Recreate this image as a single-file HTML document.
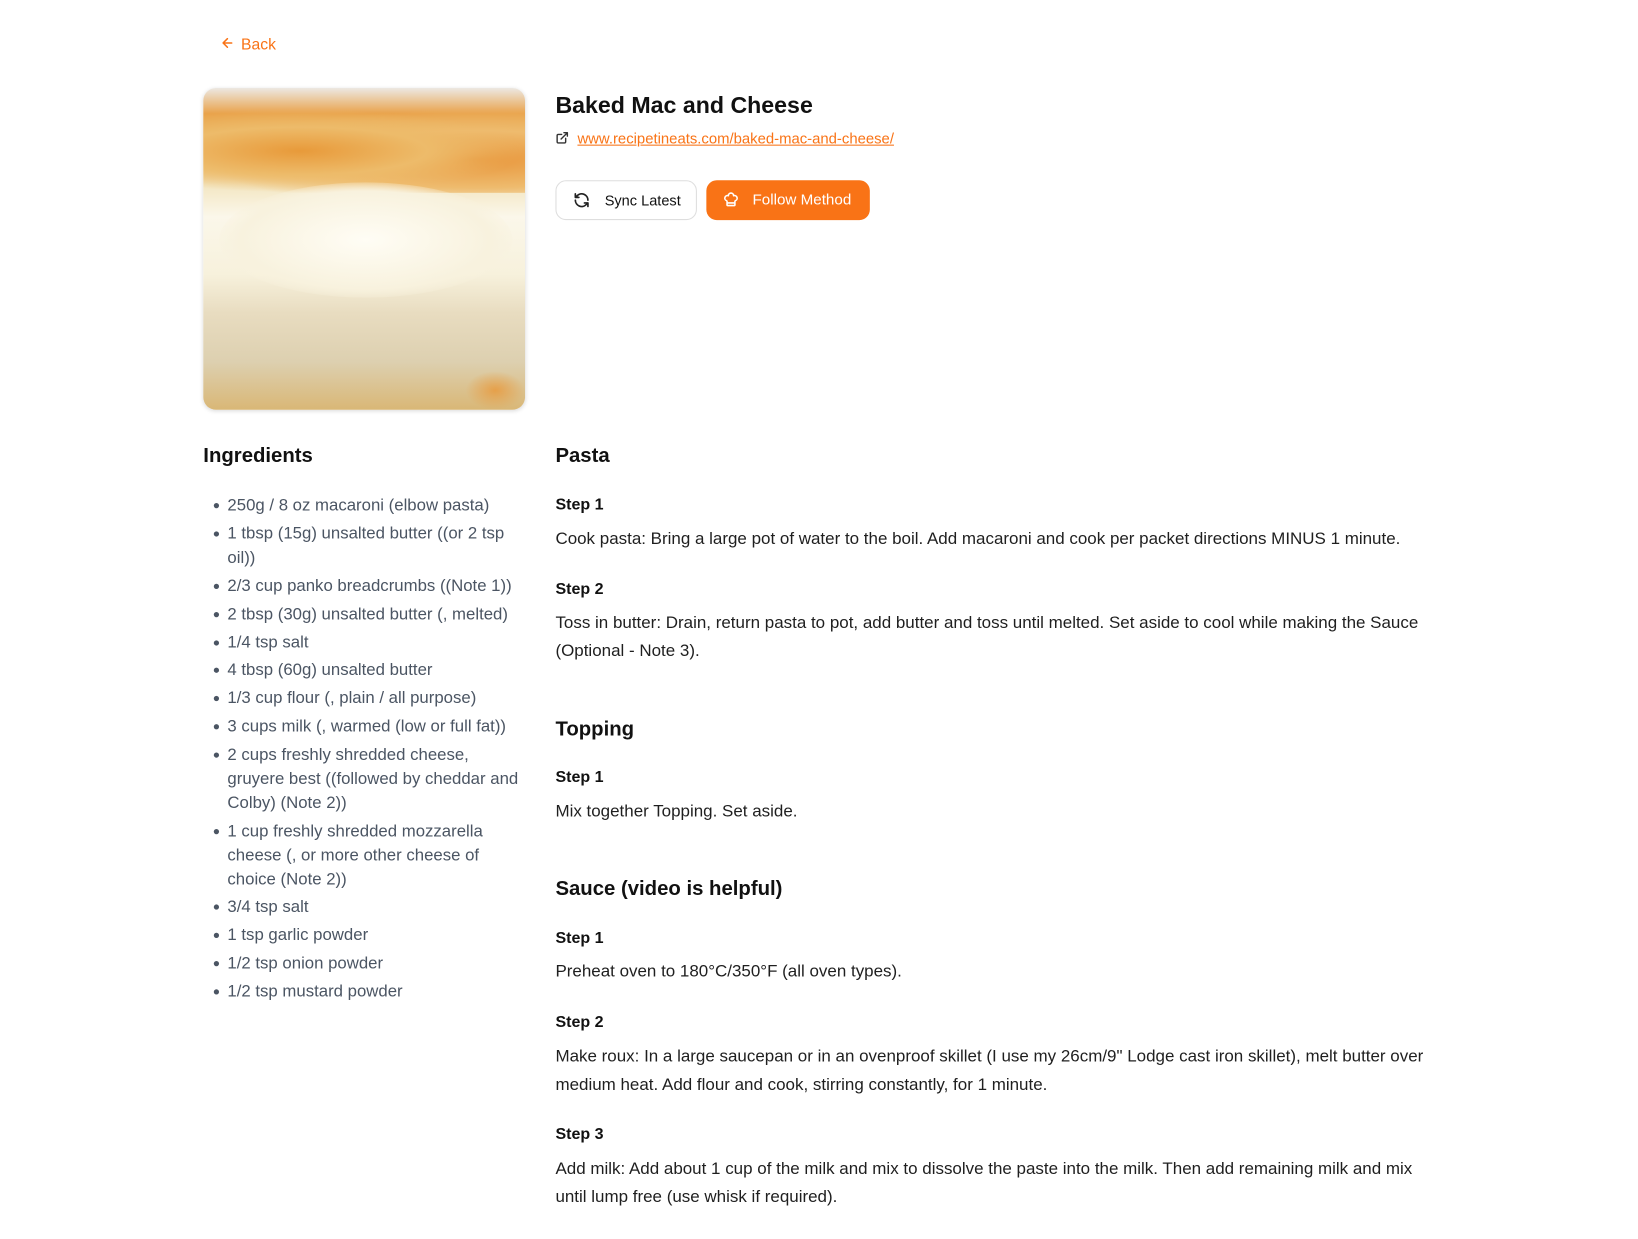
<!DOCTYPE html>
<html><head><meta charset="utf-8"><style>
*{margin:0;padding:0;box-sizing:border-box}
body{width:1638px;height:1238px;background:#fff;font-family:"Liberation Sans",sans-serif;position:relative;overflow:hidden;color:#111}
#w{position:absolute;left:0;top:0;width:1563px;height:1182px;transform:scale(1.048);transform-origin:0 0}
.a{position:absolute;white-space:nowrap}
.t{font-size:16.2px;line-height:27px;height:27px;color:#1f1f1f}
.ing{font-size:16px;line-height:23px;height:23px;color:#4b5563}
.b{position:absolute;width:5px;height:5px;border-radius:50%;background:#4b5563}
.h{font-size:19.4px;font-weight:bold;line-height:28px}
.s{font-size:15.3px;font-weight:bold;line-height:22px}
</style></head><body><div id="w">
<div class="a" style="left:210px;top:33px;color:#f97316;font-size:15px;line-height:20px">
<svg width="14" height="14" viewBox="0 0 24 24" fill="none" stroke="#f97316" stroke-width="2.5" stroke-linecap="round" stroke-linejoin="round" style="vertical-align:-1px;margin-right:6px"><path d="M19 12H5M12 19l-7-7 7-7"/></svg>Back</div>

<div class="a" style="left:194px;top:84px;width:307px;height:307px;border-radius:12px;overflow:hidden;box-shadow:0 1px 4px rgba(0,0,0,.15);background:linear-gradient(180deg,#ece8e2 0%,#e9a24a 8%,#e8b25a 20%,#f3e6c2 30%,#fbf7ea 40%,#f7f1dc 58%,#e8dcc0 70%,#ddd0b0 85%,#d9b776 100%)">
<div style="position:absolute;left:0;top:20px;width:307px;height:80px;background:radial-gradient(ellipse at 30% 50%,#e89a3a 0,#edbb6a 40%,transparent 70%),radial-gradient(ellipse at 85% 60%,#e8953a 0,#eebb6e 40%,transparent 70%)"></div>
<div style="position:absolute;left:15px;top:90px;width:280px;height:110px;border-radius:50%;background:radial-gradient(ellipse,#fffdf5 0,#f8f2de 60%,transparent 75%)"></div>
<div style="position:absolute;left:250px;top:270px;width:57px;height:37px;background:radial-gradient(ellipse,#e6a04a,transparent 70%)"></div>
</div>

<div class="a" style="left:530px;top:86px;font-size:22.1px;font-weight:bold;line-height:30px;color:#111">Baked Mac and Cheese</div>
<div class="a" style="left:530px;top:123px;font-size:14.2px;line-height:20px;color:#f97316">
<svg width="13" height="13" viewBox="0 0 24 24" fill="none" stroke="#333" stroke-width="2.5" stroke-linecap="round" stroke-linejoin="round" style="vertical-align:-1px;margin-right:8px"><path d="M18 13v6a2 2 0 0 1-2 2H5a2 2 0 0 1-2-2V8a2 2 0 0 1 2-2h6M15 3h6v6M10 14 21 3"/></svg><span style="text-decoration:underline">www.recipetineats.com/baked-mac-and-cheese/</span></div>

<div class="a" style="left:530px;top:172px;width:135px;height:38px;border:1px solid #dedede;border-radius:10px;font-size:13.9px;line-height:36px;color:#111">
<svg width="16" height="16" viewBox="0 0 24 24" fill="none" stroke="#222" stroke-width="2.4" stroke-linecap="round" stroke-linejoin="round" style="position:absolute;left:16px;top:10px"><path d="M21 12a9 9 0 0 0-15.5-6.3L3 8M3 3v5h5M3 12a9 9 0 0 0 15.5 6.3L21 16M21 21v-5h-5"/></svg><span style="position:absolute;left:46px">Sync Latest</span></div>
<div class="a" style="left:674px;top:172px;width:156px;height:38px;background:#f97316;border-radius:10px;font-size:14.5px;line-height:38px;color:#fff">
<svg width="15" height="15" viewBox="0 0 24 24" fill="none" stroke="#fff" stroke-width="2.4" stroke-linecap="round" stroke-linejoin="round" style="position:absolute;left:16px;top:11px"><path d="M17 21a1 1 0 0 0 1-1v-5.35c0-.46.32-.85.74-1.05A4 4 0 0 0 16 6a4 4 0 0 0-8 0 4 4 0 0 0-2.74 7.6c.42.2.74.59.74 1.05V20a1 1 0 0 0 1 1ZM6 17h12"/></svg><span style="position:absolute;left:44px">Follow Method</span></div>

<div class="a h" style="left:194px;top:421px">Ingredients</div>
<div class="b" style="left:204px;top:480px"></div><div class="a ing" style="left:217px;top:471px">250g / 8 oz macaroni (elbow pasta)</div>
<div class="b" style="left:204px;top:507px"></div><div class="a ing" style="left:217px;top:498px">1 tbsp (15g) unsalted butter ((or 2 tsp</div><div class="a ing" style="left:217px;top:521px">oil))</div>
<div class="b" style="left:204px;top:557px"></div><div class="a ing" style="left:217px;top:548px">2/3 cup panko breadcrumbs ((Note 1))</div>
<div class="b" style="left:204px;top:584px"></div><div class="a ing" style="left:217px;top:575px">2 tbsp (30g) unsalted butter (, melted)</div>
<div class="b" style="left:204px;top:611px"></div><div class="a ing" style="left:217px;top:602px">1/4 tsp salt</div>
<div class="b" style="left:204px;top:637px"></div><div class="a ing" style="left:217px;top:628px">4 tbsp (60g) unsalted butter</div>
<div class="b" style="left:204px;top:664px"></div><div class="a ing" style="left:217px;top:655px">1/3 cup flour (, plain / all purpose)</div>
<div class="b" style="left:204px;top:691px"></div><div class="a ing" style="left:217px;top:682px">3 cups milk (, warmed (low or full fat))</div>
<div class="b" style="left:204px;top:718px"></div><div class="a ing" style="left:217px;top:709px">2 cups freshly shredded cheese,</div><div class="a ing" style="left:217px;top:732px">gruyere best ((followed by cheddar and</div><div class="a ing" style="left:217px;top:755px">Colby) (Note 2))</div>
<div class="b" style="left:204px;top:791px"></div><div class="a ing" style="left:217px;top:782px">1 cup freshly shredded mozzarella</div><div class="a ing" style="left:217px;top:805px">cheese (, or more other cheese of</div><div class="a ing" style="left:217px;top:828px">choice (Note 2))</div>
<div class="b" style="left:204px;top:863px"></div><div class="a ing" style="left:217px;top:854px">3/4 tsp salt</div>
<div class="b" style="left:204px;top:890px"></div><div class="a ing" style="left:217px;top:881px">1 tsp garlic powder</div>
<div class="b" style="left:204px;top:917px"></div><div class="a ing" style="left:217px;top:908px">1/2 tsp onion powder</div>
<div class="b" style="left:204px;top:944px"></div><div class="a ing" style="left:217px;top:935px">1/2 tsp mustard powder</div>

<div class="a h" style="left:530px;top:421px">Pasta</div>
<div class="a s" style="left:530px;top:471px">Step 1</div>
<div class="a t" style="left:530px;top:501px">Cook pasta: Bring a large pot of water to the boil. Add macaroni and cook per packet directions MINUS 1 minute.</div>
<div class="a s" style="left:530px;top:552px">Step 2</div>
<div class="a t" style="left:530px;top:581px">Toss in butter: Drain, return pasta to pot, add butter and toss until melted. Set aside to cool while making the Sauce</div>
<div class="a t" style="left:530px;top:608px">(Optional - Note 3).</div>

<div class="a h" style="left:530px;top:682px">Topping</div>
<div class="a s" style="left:530px;top:731px">Step 1</div>
<div class="a t" style="left:530px;top:761px">Mix together Topping. Set aside.</div>

<div class="a h" style="left:530px;top:834px">Sauce (video is helpful)</div>
<div class="a s" style="left:530px;top:885px">Step 1</div>
<div class="a t" style="left:530px;top:914px">Preheat oven to 180°C/350°F (all oven types).</div>
<div class="a s" style="left:530px;top:965px">Step 2</div>
<div class="a t" style="left:530px;top:995px">Make roux: In a large saucepan or in an ovenproof skillet (I use my 26cm/9" Lodge cast iron skillet), melt butter over</div>
<div class="a t" style="left:530px;top:1022px">medium heat. Add flour and cook, stirring constantly, for 1 minute.</div>
<div class="a s" style="left:530px;top:1072px">Step 3</div>
<div class="a t" style="left:530px;top:1102px">Add milk: Add about 1 cup of the milk and mix to dissolve the paste into the milk. Then add remaining milk and mix</div>
<div class="a t" style="left:530px;top:1129px">until lump free (use whisk if required).</div>
</div></body></html>
